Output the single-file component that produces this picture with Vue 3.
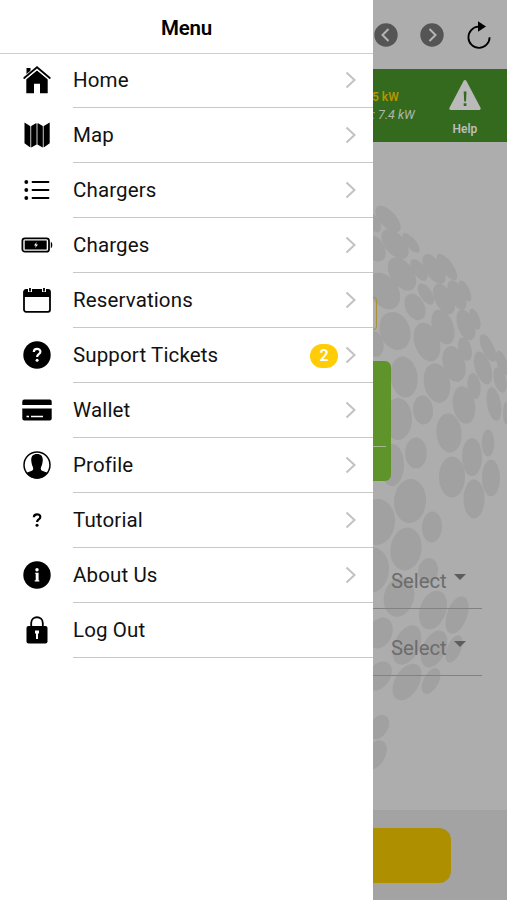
<script setup>
import {ref} from "vue";

// menu entries, badge is the number of open tickets
const menu = ref([
  {icon: "home", label: "Home"},
  {icon: "map", label: "Map"},
  {icon: "list", label: "Chargers"},
  {icon: "battery", label: "Charges"},
  {icon: "calendar", label: "Reservations"},
  {icon: "support", label: "Support Tickets", badge: 2},
  {icon: "card", label: "Wallet"},
  {icon: "profile", label: "Profile"},
  {icon: "question", label: "Tutorial"},
  {icon: "info", label: "About Us"},
  {icon: "lock", label: "Log Out", last: true},
]);

const selects = ref(["Select", "Select"]);

// globe pattern: cx, cy, rx, ry, rotation
const dots = [
  [374, 223, 6, 10, -30], [388, 219, 8, 16.5, -43], [411, 243, 5, 12, -40], [395, 244, 10, 17.5, -40],
  [374, 248, 10, 15, -35], [402, 274, 11.5, 18.5, -35], [419, 270, 6, 12.5, -35], [434, 269, 8.5, 17, -33],
  [447, 267, 6, 15.5, -35], [426, 294, 6, 12, -33], [444, 299, 9, 16.5, -27], [457, 295, 7.5, 16, -25],
  [465, 291, 4.5, 11.5, -25], [384, 291, 14, 20, -35], [415, 307, 9.5, 14, -28], [395, 331, 15, 19.5, -20],
  [427, 342, 12.5, 20, -18], [443, 327, 10.5, 18, -20], [466, 325, 8.5, 16, -20], [475, 319, 4.5, 11, -20],
  [465, 349, 6.5, 12, -15], [375, 344, 8.5, 13, -10], [488, 348, 6, 15, -25], [483, 368, 8, 17, -18],
  [454, 364, 11, 18.5, -15], [404, 377, 13.5, 20.5, -8], [437, 383, 13, 20, -12], [474, 386, 6.5, 13, -8],
  [464, 405, 11, 19, -10], [494, 404, 7, 17, -10], [500, 380, 6, 13, -15], [502, 363, 5, 13, -18],
  [506, 413, 3, 11, 0], [423, 410, 10, 14.5, -5], [398, 419, 14, 21, 0], [449, 433, 12.5, 19.5, -5],
  [416, 453, 10.8, 15.5, 0], [472, 457, 10, 19, 0], [488, 443, 6.3, 13.5, 0], [392, 465, 12, 21, 0],
  [452, 477, 13, 20.5, 0], [491, 478, 9, 18.3, 0], [474, 499, 10.5, 19.5, 0], [410, 501, 16, 22, 3],
  [377, 522, 18, 23, 5], [432, 527, 10, 15.5, 3], [406, 549, 15.5, 21.5, 8], [371, 570, 18, 23, 5],
  [399, 597, 15, 20, 15], [428, 571, 10, 13, 10], [433, 610, 13, 20, 20], [457, 615, 10, 19.5, 20],
  [380, 633, 12, 16, 25], [407, 645, 12.5, 21, 25], [434, 649, 11.5, 19.5, 25], [454, 649, 7, 14.5, 22],
  [379, 676, 11, 16, 35], [407, 682, 12, 20, 30], [431, 681, 7.5, 14, 28], [379, 727, 9, 13, 30],
  [375, 755, 10, 16, 30],
];
</script>

<template>
  <div class="screen">
    <aside class="drawer">
      <header class="drawer-title">Menu</header>
      <nav>
        <a v-for="item in menu" :key="item.label" class="item">
          <svg class="icon" viewBox="0 0 32 32">
            <g v-if="item.icon == 'home'">
              <path d="M5.500 4h4v5l-4 4z"/>
              <path d="M5.300 15L16 6.300 26.700 15V29.300h-7.700v-9.500h-6v9.500H5.300z"/>
              <path d="M3.500 14.300L16 3.800l12.500 10.500" fill="none" stroke="#fff" stroke-width="4"/>
              <path d="M3.200 14L16 3.200 28.800 14" class="line"/>
            </g>
            <g v-else-if="item.icon == 'map'">
              <path d="M4 4.500l5.700 3 6.300-3 6 3 6-3.500v20.500l-6 4-6-3-6.300 3L4 24.500z" fill="#999"/>
              <path d="M3.500 3.500L9 7v21.300l-5.500-4zM10.300 7l5-3v21.500l-5 3zM16.700 4l5 3v21.500l-5-3zM23 7l5.700-3.500v20.800l-5.700 4z"/>
            </g>
            <g v-else-if="item.icon == 'list'">
              <path d="M11.500 8h16M11.500 16h16M11.500 24h16" class="line"/>
              <circle cx="5.300" cy="8" r="1.900"/><circle cx="5.300" cy="16" r="1.900"/><circle cx="5.300" cy="24" r="1.900"/>
            </g>
            <g v-else-if="item.icon == 'battery'">
              <rect x="1.400" y="9.300" width="26.600" height="13.400" rx="2.500" class="line"/>
              <rect x="3.700" y="11.500" width="22" height="9"/>
              <path d="M29.800 12.800c2 .6 2 5.800 0 6.400z"/>
              <path d="M15.600 13l-2.600 3.500h1.800l-.6 2.500 2.800-3.500h-1.900z" fill="#fff"/>
            </g>
            <g v-else-if="item.icon == 'calendar'">
              <rect x="3" y="6" width="26" height="21.800" rx="2" class="line"/>
              <path d="M3 6h26v7H3z"/>
              <path d="M9 4v4M23 4v4" stroke="#fff" stroke-width="4"/>
              <path d="M9 4v3.500M23 4v3.500" stroke="#000" stroke-width="1.800"/>
            </g>
            <g v-else-if="item.icon == 'support'">
              <circle cx="16" cy="16" r="13.700"/>
              <path d="M12.800 13c0-4.200 6.600-4 6.600-.3 0 2.500-3.300 2.500-3.300 5.200" class="mark"/>
              <circle cx="16.100" cy="21.300" r="1.500" fill="#fff"/>
            </g>
            <g v-else-if="item.icon == 'card'">
              <path d="M1.300 11V7.500q0-2 2-2h25.400q2 0 2 2V11zM1.300 14.500h29.400v10q0 2-2 2H3.300q-2 0-2-2z"/>
              <path d="M5.500 22.500h2.500M10 22.500h12" stroke="#fff" stroke-width="1.600"/>
            </g>
            <g v-else-if="item.icon == 'profile'">
              <circle cx="16" cy="16" r="13" fill="none" stroke="#000" stroke-width="1.500"/>
              <path d="M16 5c5 0 6.300 3.300 5.600 7.800-.3 3.700-1.600 5-1.800 6.400-.2 2.200 1 2.500 3.300 3.300 2 .7 2.800 1 3.400 1.800A13 13 0 0 1 5.500 24.300c.6-.8 1.400-1.100 3.400-1.800 2.300-.8 3.500-1.100 3.300-3.300-.2-1.400-1.500-2.700-1.800-6.400C9.700 8.300 11 5 16 5z"/>
            </g>
            <g v-else-if="item.icon == 'question'">
              <path d="M12.900 13.300c0-4 6.400-3.900 6.400-.3 0 2.500-3.200 2.300-3.200 4.900" class="mark dark"/>
              <circle cx="16" cy="21.200" r="1.500"/>
            </g>
            <g v-else-if="item.icon == 'info'">
              <circle cx="16" cy="16" r="13.700"/>
              <circle cx="16" cy="10.700" r="1.700" fill="#fff"/>
              <path d="M14.300 13.800h3.300v7.400h.7v1.200h-4.600v-1.200h1V15h-.4z" fill="#fff"/>
            </g>
            <g v-else>
              <path d="M10.200 13V9c0-7.700 11.600-7.700 11.600 0v4" class="line"/>
              <rect x="5.500" y="12" width="21" height="17.500" rx="2"/>
              <path d="M14 16.500h4v3h-1v5.500h-2v-5.500h-1z" fill="#fff"/>
            </g>
          </svg>
          <span class="entry">
            <span class="label">{{ item.label }}</span>
            <span v-if="item.badge" class="badge">{{ item.badge }}</span>
            <svg v-if="!item.last" class="chevron" viewBox="0 0 12 18"><path d="M1.500 1.500L9.500 9l-8 7.500"/></svg>
          </span>
        </a>
      </nav>
    </aside>

    <main class="page">
      <svg class="globe" viewBox="373 0 134 900">
        <ellipse v-for="(d, i) in dots" :key="i" :cx="d[0]" :cy="d[1]" :rx="d[2]" :ry="d[3]" :transform="`rotate(${d[4]} ${d[0]} ${d[1]})`"/>
      </svg>

      <header class="toolbar">
        <svg class="round" viewBox="0 0 24 24"><circle cx="12" cy="12" r="11.700"/><path d="M14.500 6L8.500 12l6 6"/></svg>
        <svg class="round" viewBox="0 0 24 24"><circle cx="12" cy="12" r="11.700"/><path d="M9.500 6l6 6-6 6"/></svg>
        <svg class="reload" viewBox="0 0 26 28">
          <path d="M14.500 5.700h-2A10.600 10.600 0 1 0 23.600 16.300" fill="none" stroke="#000" stroke-width="1.800"/>
          <path d="M12 .200l8 5.300-8 5.300z"/>
        </svg>
      </header>

      <section class="power">
        <div class="rates">
          <span class="now">5 kW</span>
          <span class="max">: 7.4 kW</span>
        </div>
        <div class="help">
          <svg viewBox="0 0 34 32">
            <path d="M17 2.500L31.200 29.500H2.800z" fill="#bababa" stroke="#bababa" stroke-width="3" stroke-linejoin="round"/>
            <path d="M15.700 12.500h2.800l-.5 10h-1.800zM15.700 24.300h2.700v2.700h-2.700z" fill="#346a1d"/>
          </svg>
          <span>Help</span>
        </div>
      </section>

      <section class="content">
        <div class="code"></div>
        <div class="card"><div class="rule"></div></div>
        <div v-for="(s, i) in selects" :key="i" class="select">
          <span>{{ s }}</span>
          <i class="caret"></i>
        </div>
      </section>

      <footer class="bottom"><button class="start"></button></footer>
    </main>
  </div>
</template>

<style>
body{
  margin: 0;
  overflow: hidden;
}
</style>

<style scoped>
.screen{
  display: flex;
  width: 507px;
  height: 900px;
  font-family: Roboto, sans-serif;
  color: #111;
}
.drawer{
  width: 373px;
  flex: none;
  background-color: white;
}
.drawer-title{
  box-sizing: border-box;
  height: 54px;
  padding-top: 2px;
  border-bottom: 1px solid #cfcfcf;
  line-height: 53px;
  text-align: center;
  font-size: 20.5px;
  font-weight: 600;
  letter-spacing: -0.2px;
  color: #000;
}
nav{
  margin-top: -1px;
}
.item{
  display: flex;
  align-items: center;
  height: 55px;
}
.icon{
  width: 32px;
  height: 32px;
  margin: 0 20px 1px 21px;
  flex: none;
}
.line{
  fill: none;
  stroke: #000;
  stroke-width: 1.8;
  stroke-linecap: round;
}
.mark{
  fill: none;
  stroke: #fff;
  stroke-width: 2.2;
}
.dark{
  stroke: #000;
}
.entry{
  display: flex;
  align-items: center;
  flex: 1;
  box-sizing: border-box;
  height: 55px;
  padding-right: 16px;
  border-bottom: 1px solid #c8c8c8;
}
.label{
  flex: 1;
  font-size: 20.5px;
  letter-spacing: 0.13px;
}
.badge{
  width: 28px;
  height: 24px;
  margin: 1px 7px 0 0;
  border-radius: 12px;
  background-color: #ffcc05;
  color: white;
  font-size: 16px;
  font-weight: 600;
  line-height: 24px;
  text-align: center;
}
.chevron{
  width: 12px;
  height: 18px;
}
.chevron path{
  fill: none;
  stroke: #c2c2c4;
  stroke-width: 2;
}

.page{
  position: relative;
  display: flex;
  flex-direction: column;
  width: 134px;
  overflow: hidden;
  background-color: #adadad;
}
.globe{
  position: absolute;
  top: 0;
  left: 0;
  width: 134px;
  height: 900px;
  fill: #a1a1a1;
}
.toolbar, .power, .content, .bottom{
  position: relative;
}
.toolbar{
  display: flex;
  align-items: center;
  box-sizing: border-box;
  height: 69px;
  padding-left: 1px;
}
.round{
  width: 24px;
  height: 24px;
  margin: 1px 22px 0 0;
  flex: none;
}
.round circle{
  fill: #555;
}
.round path{
  fill: none;
  stroke: #b5b5b5;
  stroke-width: 2;
}
.reload{
  width: 26px;
  height: 28px;
  margin-top: 1px;
  flex: none;
}
.power{
  display: flex;
  height: 73px;
  background-color: #346a1d;
}
.rates{
  display: flex;
  flex-direction: column;
  width: 43px;
  padding-top: 20px;
  font-size: 12px;
  line-height: 17px;
  white-space: nowrap;
}
.now{
  margin-left: -1px;
  font-weight: 600;
  color: #b59500;
}
.max{
  margin-left: -1px;
  font-size: 12.5px;
  font-style: italic;
  color: #b0b8ac;
}
.help{
  display: flex;
  flex-direction: column;
  align-items: center;
  width: 97px;
  padding: 10px 0 0 3px;
  box-sizing: border-box;
  flex: none;
  font-size: 12px;
  font-weight: 600;
  color: #bdbdbd;
}
.help svg{
  width: 34px;
  height: 32px;
  margin: 0 0 11px 0;
}
.content{
  flex: 1;
}
.code{
  box-sizing: border-box;
  width: 4px;
  height: 33px;
  margin-top: 155px;
  border: 1.500px solid #aa9138;
  border-left: none;
  border-radius: 0 4px 4px 0;
}
.card{
  box-sizing: border-box;
  width: 18px;
  height: 120px;
  margin-top: 31px;
  padding-top: 85px;
  border-radius: 0 6px 6px 0;
  background-color: #5f942b;
}
.rule{
  width: 13px;
  height: 1px;
  background-color: #a2b98a;
}
.select{
  display: flex;
  box-sizing: border-box;
  width: 109px;
  height: 67px;
  padding: 27px 0 0 18px;
  border-bottom: 1px solid #828282;
  font-size: 20.300px;
  line-height: 24px;
  color: #6c6c6c;
}
.card + .select{
  margin-top: 61px;
}
.caret{
  height: 0;
  margin: 5px 0 0 7px;
  border: 6px solid transparent;
  border-top-color: #5d5d5d;
  border-bottom: none;
}
.bottom{
  height: 90px;
  background-color: #a3a3a3;
}
.start{
  display: block;
  width: 78px;
  height: 55px;
  margin-top: 18px;
  border: none;
  border-radius: 0 12px 12px 0;
  background-color: #ad8f00;
}
</style>
